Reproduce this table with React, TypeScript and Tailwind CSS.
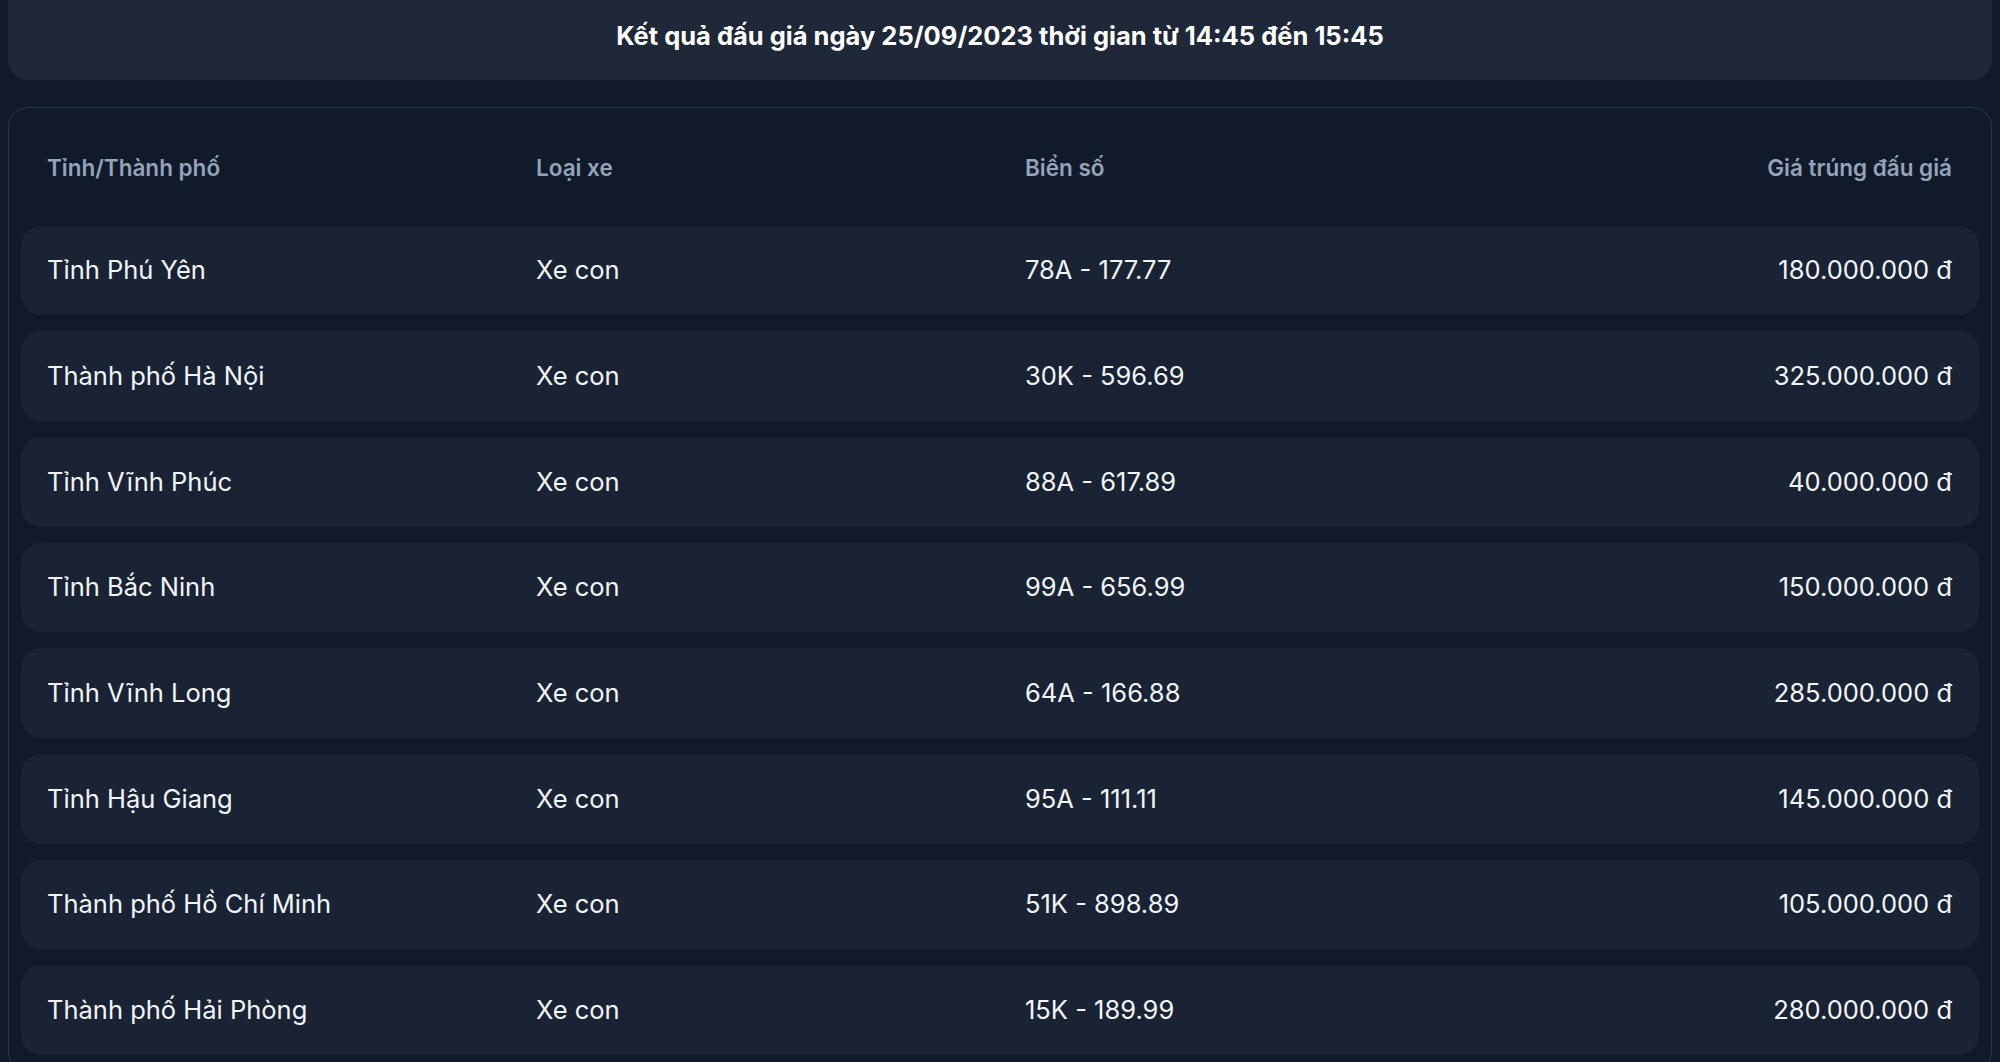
import React from 'react';

interface AuctionRow {
  province: string;
  type: string;
  plate: string;
  price: string;
}

const rows: AuctionRow[] = [
  { province: 'Tỉnh Phú Yên', type: 'Xe con', plate: '78A - 177.77', price: '180.000.000 đ' },
  { province: 'Thành phố Hà Nội', type: 'Xe con', plate: '30K - 596.69', price: '325.000.000 đ' },
  { province: 'Tỉnh Vĩnh Phúc', type: 'Xe con', plate: '88A - 617.89', price: '40.000.000 đ' },
  { province: 'Tỉnh Bắc Ninh', type: 'Xe con', plate: '99A - 656.99', price: '150.000.000 đ' },
  { province: 'Tỉnh Vĩnh Long', type: 'Xe con', plate: '64A - 166.88', price: '285.000.000 đ' },
  { province: 'Tỉnh Hậu Giang', type: 'Xe con', plate: '95A - 111.11', price: '145.000.000 đ' },
  { province: 'Thành phố Hồ Chí Minh', type: 'Xe con', plate: '51K - 898.89', price: '105.000.000 đ' },
  { province: 'Thành phố Hải Phòng', type: 'Xe con', plate: '15K - 189.99', price: '280.000.000 đ' },
];

const cols = 'grid grid-cols-[489px_489px_1fr_auto] items-center pl-[26px] pr-[27px]';

const App: React.FC = () => {
  return (
    <div className="min-h-screen bg-[#111a2b] px-[8px] pb-6 font-['Inter','Noto_Sans',sans-serif]">
      <div className="rounded-b-[20px] bg-[#1e2839] pt-[20px] pb-[28px] text-center">
        <h1 className="text-[25.5px] leading-[32px] font-bold text-white">
          Kết quả đấu giá ngày 25/09/2023 thời gian từ 14:45 đến 15:45
        </h1>
      </div>

      <div className="mt-[27px] rounded-[20px] border border-[#2a3649] bg-[#111a2b] px-[12px] pt-[12px] pb-4">
        <div className={`${cols} h-[96px] mb-[9.5px] text-[22.5px] font-semibold text-[#94a3b8]`}>
          <div>Tỉnh/Thành phố</div>
          <div>Loại xe</div>
          <div>Biển số</div>
          <div className="text-right">Giá trúng đấu giá</div>
        </div>

        <div className="flex flex-col gap-[16px]">
          {rows.map((row, i) => (
            <div
              key={i}
              className={`${cols} h-[89.7px] rounded-[20px] bg-[#1a2333] text-[25.5px] text-[#f1f5f9]`}
            >
              <div>{row.province}</div>
              <div>{row.type}</div>
              <div>{row.plate}</div>
              <div className="text-right">{row.price}</div>
            </div>
          ))}
        </div>
      </div>
    </div>
  );
};

export default App;
